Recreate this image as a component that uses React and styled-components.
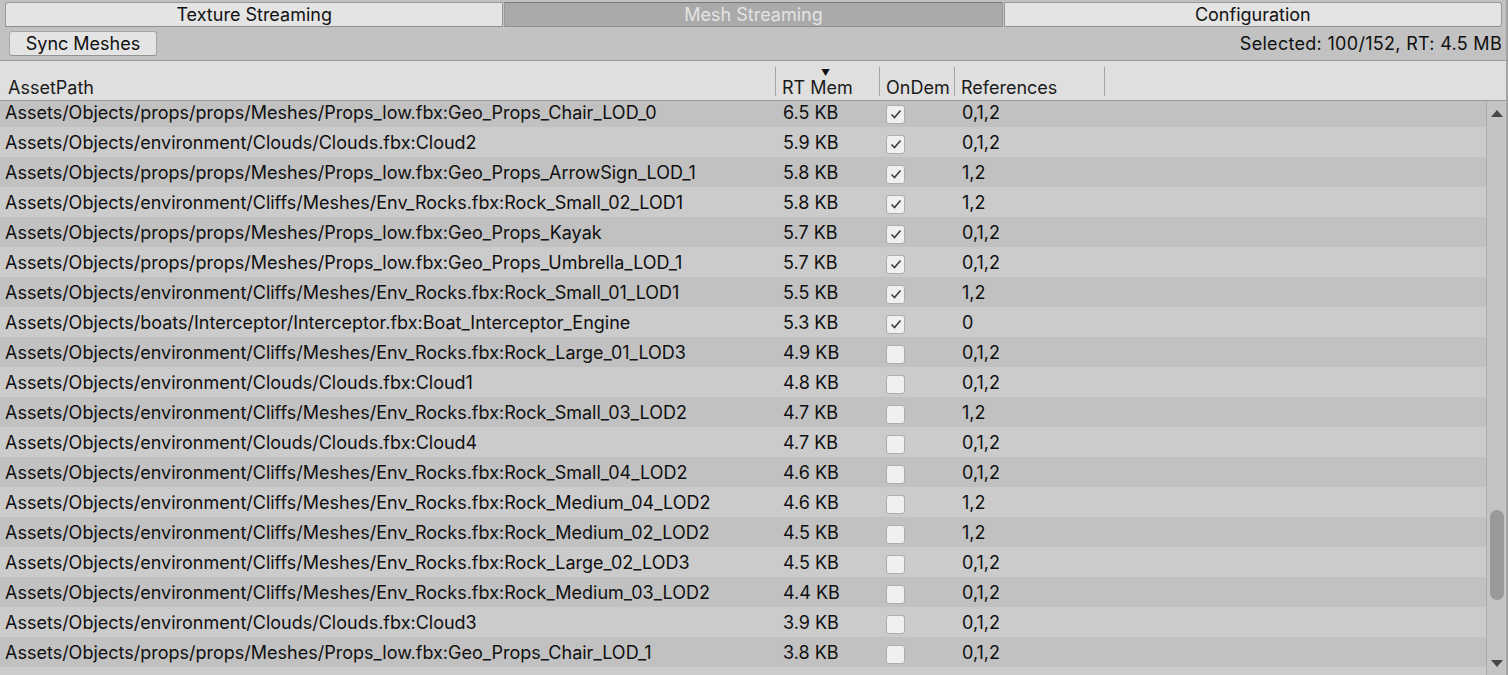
import React from 'react'
import styled, { createGlobalStyle } from 'styled-components';

const GlobalStyle = createGlobalStyle`
  html, body {
    margin: 0;
    padding: 0;
    background: #c2c2c2;
    overflow: hidden;
  }
  body {
    font-family: 'Inter', 'Liberation Sans', sans-serif;
    color: #0f0f0f;
  }
`;

const rows = [
    ['Assets/Objects/props/props/Meshes/Props_low.fbx:Geo_Props_Chair_LOD_0', '6.5 KB', true, '0,1,2'],
    ['Assets/Objects/environment/Clouds/Clouds.fbx:Cloud2', '5.9 KB', true, '0,1,2'],
    ['Assets/Objects/props/props/Meshes/Props_low.fbx:Geo_Props_ArrowSign_LOD_1', '5.8 KB', true, '1,2'],
    ['Assets/Objects/environment/Cliffs/Meshes/Env_Rocks.fbx:Rock_Small_02_LOD1', '5.8 KB', true, '1,2'],
    ['Assets/Objects/props/props/Meshes/Props_low.fbx:Geo_Props_Kayak', '5.7 KB', true, '0,1,2'],
    ['Assets/Objects/props/props/Meshes/Props_low.fbx:Geo_Props_Umbrella_LOD_1', '5.7 KB', true, '0,1,2'],
    ['Assets/Objects/environment/Cliffs/Meshes/Env_Rocks.fbx:Rock_Small_01_LOD1', '5.5 KB', true, '1,2'],
    ['Assets/Objects/boats/Interceptor/Interceptor.fbx:Boat_Interceptor_Engine', '5.3 KB', true, '0'],
    ['Assets/Objects/environment/Cliffs/Meshes/Env_Rocks.fbx:Rock_Large_01_LOD3', '4.9 KB', false, '0,1,2'],
    ['Assets/Objects/environment/Clouds/Clouds.fbx:Cloud1', '4.8 KB', false, '0,1,2'],
    ['Assets/Objects/environment/Cliffs/Meshes/Env_Rocks.fbx:Rock_Small_03_LOD2', '4.7 KB', false, '1,2'],
    ['Assets/Objects/environment/Clouds/Clouds.fbx:Cloud4', '4.7 KB', false, '0,1,2'],
    ['Assets/Objects/environment/Cliffs/Meshes/Env_Rocks.fbx:Rock_Small_04_LOD2', '4.6 KB', false, '0,1,2'],
    ['Assets/Objects/environment/Cliffs/Meshes/Env_Rocks.fbx:Rock_Medium_04_LOD2', '4.6 KB', false, '1,2'],
    ['Assets/Objects/environment/Cliffs/Meshes/Env_Rocks.fbx:Rock_Medium_02_LOD2', '4.5 KB', false, '1,2'],
    ['Assets/Objects/environment/Cliffs/Meshes/Env_Rocks.fbx:Rock_Large_02_LOD3', '4.5 KB', false, '0,1,2'],
    ['Assets/Objects/environment/Cliffs/Meshes/Env_Rocks.fbx:Rock_Medium_03_LOD2', '4.4 KB', false, '0,1,2'],
    ['Assets/Objects/environment/Clouds/Clouds.fbx:Cloud3', '3.9 KB', false, '0,1,2'],
    ['Assets/Objects/props/props/Meshes/Props_low.fbx:Geo_Props_Chair_LOD_1', '3.8 KB', false, '0,1,2'],
    ['Assets/Objects/environment/Cliffs/Meshes/Env_Rocks.fbx:Rock_Medium_01_LOD3', '3.8 KB', false, '0,1,2'],
];

const tabs = ['Texture Streaming', 'Mesh Streaming', 'Configuration'];
const COLS = '775px 104px 75px 150px 1fr';

function App() {
    return (
        <Window>
            <GlobalStyle />
            <TabBar>
                {tabs.map((t, i) => (
                    <Tab key={t} active={i === 1}>{t}</Tab>
                ))}
            </TabBar>
            <Toolbar>
                <Button>Sync Meshes</Button>
                <Status>Selected: 100/152, RT: 4.5 MB</Status>
            </Toolbar>
            <Header>
                <HeadCell>AssetPath</HeadCell>
                <HeadCell sep>
                    <SortArrow>▼</SortArrow>
                    RT Mem
                </HeadCell>
                <HeadCell sep>OnDem</HeadCell>
                <HeadCell sep>References</HeadCell>
                <HeadCell sep />
            </Header>
            <Body>
                <List>
                    <Scroller>
                        {rows.map((r, i) => (
                            <Row key={i} dark={i % 2 === 0}>
                                <Cell>{r[0]}</Cell>
                                <Cell pad={8}>{r[1]}</Cell>
                                <Cell pad={7}>
                                    <Check>
                                        {r[2] && (
                                            <svg width="12" height="10" viewBox="0 0 12 10">
                                                <polyline points="1.5,5.5 4.5,8.5 10.5,1.5" fill="none" stroke="#3c3c3c" strokeWidth="1.6" />
                                            </svg>
                                        )}
                                    </Check>
                                </Cell>
                                <Cell pad={8}>{r[3]}</Cell>
                                <Cell />
                            </Row>
                        ))}
                    </Scroller>
                </List>
                <ScrollBar>
                    <Arrow>
                        <svg width="12" height="7" viewBox="0 0 12 7"><polygon points="0,7 12,7 6,0" fill="#474747" /></svg>
                    </Arrow>
                    <Track>
                        <Thumb />
                    </Track>
                    <Arrow>
                        <svg width="12" height="7" viewBox="0 0 12 7"><polygon points="0,0 12,0 6,7" fill="#474747" /></svg>
                    </Arrow>
                </ScrollBar>
            </Body>
        </Window>
    )
}

const Window = styled.div`
    display: flex;
    flex-direction: column;
    height: 675px;
    width: 1508px;
    box-sizing: border-box;
    border-right: 2px solid #a3a3a3;
    overflow: hidden;
`;

const TabBar = styled.div`
    display: flex;
    padding: 2px 4px 0 5px;
    height: 26px;
    box-sizing: border-box;
`;

const Tab = styled.div`
    flex: 1;
    display: flex;
    align-items: center;
    justify-content: center;
    font-size: 18px;
    height: 25px;
    box-sizing: border-box;
    background: ${p => p.active ? '#aaaaaa' : '#e4e4e4'};
    color: ${p => p.active ? '#e4e4e4' : '#111'};
    border: 1px solid #999;
    border-top-color: ${p => p.active ? '#7a7a7a' : '#999'};
    border-bottom-color: #8f8f8f;
    margin-right: 1px;
    &:first-child { border-top-left-radius: 3px; }
    &:last-child { border-top-right-radius: 3px; border-bottom-right-radius: 3px; margin-right: 0; }
`;

const Toolbar = styled.div`
    display: flex;
    align-items: center;
    justify-content: space-between;
    height: 35px;
    padding: 0 4px 0 9px;
    box-sizing: border-box;
    border-bottom: 1px solid #999;
`;

const Button = styled.div`
    height: 25px;
    width: 148px;
    box-sizing: border-box;
    display: flex;
    align-items: center;
    justify-content: center;
    font-size: 18px;
    background: #e4e4e4;
    border: 1px solid #a5a5a5;
    border-bottom-color: #939393;
    border-radius: 3px;
    margin-top: 1px;
`;

const Status = styled.div`
    font-size: 18px;
    letter-spacing: 0.3px;
    margin-top: 1px;
`;

const Header = styled.div`
    display: grid;
    grid-template-columns: ${COLS};
    height: 40px;
    background: #dfdfdf;
    border-bottom: 1px solid #999;
    box-sizing: border-box;
`;

const HeadCell = styled.div`
    position: relative;
    display: flex;
    align-items: flex-end;
    padding: 0 0 2px ${p => p.sep ? 7 : 8}px;
    font-size: 18px;
    color: #1a1a1a;
    white-space: nowrap;
    overflow: hidden;
    ${p => p.sep && `
        &::before {
            content: "";
            position: absolute;
            left: 0;
            top: 6px;
            bottom: 4px;
            width: 1px;
            background: #a5a5a5;
        }
    `}
`;

const SortArrow = styled.span`
    position: absolute;
    top: 6px;
    left: 46px;
    font-size: 9px;
    color: #111;
`;

const Body = styled.div`
    flex: 1;
    display: flex;
    overflow: hidden;
`;

const List = styled.div`
    flex: 1;
    overflow: hidden;
`;

const Scroller = styled.div`
    margin-top: -4px;
`;

const Row = styled.div`
    display: grid;
    grid-template-columns: ${COLS};
    height: 30px;
    align-items: center;
    background: ${p => p.dark ? '#c1c1c1' : '#cbcbcb'};
`;

const Cell = styled.div`
    padding-left: ${p => p.pad || 5}px;
    font-size: 18px;
    white-space: nowrap;
    overflow: hidden;
    display: flex;
    align-items: center;
    padding-top: 1px;
`;

const Check = styled.div`
    width: 19px;
    height: 19px;
    box-sizing: border-box;
    background: #f0f0f0;
    border: 1px solid #adadad;
    border-radius: 3px;
    display: flex;
    align-items: center;
    justify-content: center;
    margin-top: 3px;
`;

const ScrollBar = styled.div`
    width: 19px;
    display: flex;
    flex-direction: column;
    align-items: center;
    background: #c4c4c4;
    border-left: 1px solid #adadad;
`;

const Arrow = styled.div`
    height: 24px;
    display: flex;
    align-items: center;
`;

const Track = styled.div`
    flex: 1;
    width: 100%;
    display: flex;
    flex-direction: column;
    align-items: center;
    padding-top: 385px;
    box-sizing: border-box;
`;

const Thumb = styled.div`
    width: 14px;
    height: 90px;
    border-radius: 7px;
    background: #999999;
`;

export default App;
